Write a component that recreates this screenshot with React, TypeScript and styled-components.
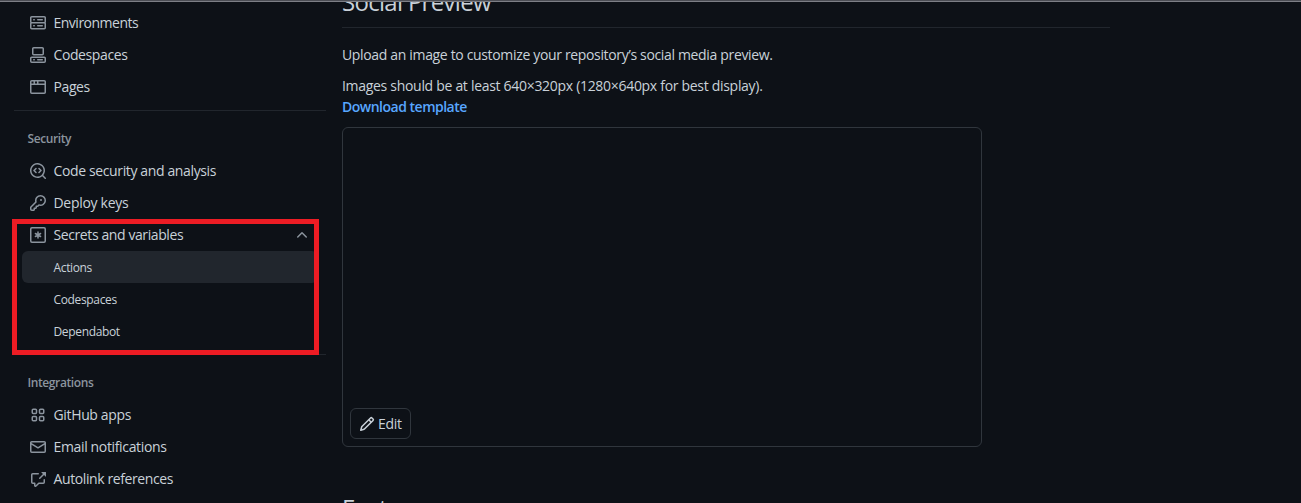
import React from "react";
import styled, { createGlobalStyle } from "styled-components";

const Global = createGlobalStyle`
  *, *::before, *::after { box-sizing: border-box; }
  body {
    margin: 0;
    background: #0d1117;
    color: #c9d1d9;
    font-family: "Open Sans", "Noto Sans", sans-serif;
    font-size: 14px;
    line-height: 21px;
    overflow: hidden;
  }
  h2, p, ul { margin: 0; padding: 0; font-weight: 400; }
`;

const Frame = styled.div`
  height: 503px;
  overflow: hidden;
`;

const TopEdge = styled.div`
  height: 2px;
  background: #7d7f86;
  border-top: 1px solid #4b4d54;
`;

const Page = styled.div`
  height: 501px;
  display: flex;
  overflow: hidden;
`;

const Sidebar = styled.nav`
  position: relative;
  width: 326px;
  padding: 5px 0 0 14px;
  flex: none;
`;

const List = styled.ul`
  list-style: none;
`;

const Row = styled.li`
  display: flex;
  align-items: center;
  gap: 7.5px;
  height: 32px;
  padding: 0 16px;
  white-space: nowrap;
`;

const Label = styled.span<{ $track?: number }>`
  flex: 1;
  padding-bottom: 1px;
  line-height: 20px;
  letter-spacing: ${(p) => p.$track ?? -0.4}px;
`;

const SubRow = styled.li<{ $active?: boolean; $track?: number }>`
  height: 32px;
  margin: 0 8px;
  padding-left: 31.5px;
  border-radius: 6px;
  font-size: 12px;
  line-height: 33px;
  letter-spacing: ${(p) => p.$track ?? -0.35}px;
  background: ${(p) => (p.$active ? "#21262d" : "transparent")};
`;

const Divider = styled.hr`
  height: 1px;
  margin: 7px 0 0;
  border: 0;
  background: #21262d;
`;

const GroupTitle = styled.h2`
  padding: 18px 0 8px 13.5px;
  height: 44px;
  font-size: 12px;
  line-height: 19px;
  letter-spacing: -0.4px;
  && { font-weight: 600; }
  color: #8b949e;
`;

const Highlight = styled.div`
  position: absolute;
  left: 12px;
  top: 217px;
  width: 307px;
  height: 136px;
  border: 5px solid #ed1c24;
`;

const Main = styled.main`
  width: 768px;
  margin-left: 16px;
  flex: none;
`;

const Heading = styled.h2<{ $gap?: number }>`
  margin-top: ${(p) => p.$gap ?? 0}px;
  height: 36px;
  font-size: 24px;
  line-height: 36px;
  letter-spacing: -0.7px;
`;

const TopHeading = styled(Heading)`
  margin-top: -18px;
  height: 44px;
  border-bottom: 1px solid #21262d;
`;

const Text = styled.p<{ $track?: number; $gap?: number }>`
  margin-top: ${(p) => p.$gap ?? 0}px;
  letter-spacing: ${(p) => p.$track ?? -0.3}px;
  white-space: nowrap;
`;

const Link = styled.a`
  display: block;
  width: max-content;
  color: #58a6ff;
  font-weight: 600;
  letter-spacing: -0.5px;
`;

const Preview = styled.div`
  display: flex;
  align-items: flex-end;
  width: 640px;
  height: 320px;
  margin-top: 10px;
  padding: 7px;
  border: 1px solid #30363d;
  border-radius: 6px;
`;

const EditButton = styled.button`
  display: flex;
  align-items: center;
  gap: 3px;
  width: 61px;
  height: 31px;
  padding: 0 8px;
  border: 1px solid #30363d;
  border-radius: 6px;
  background: transparent;
  color: #c9d1d9;
  font: inherit;
  letter-spacing: -0.3px;
`;

const Svg = styled.svg<{ $color?: string }>`
  flex: none;
  display: block;
  fill: ${(p) => p.$color ?? "#8b949e"};
`;

const paths = {
  server:
    "M1.75 1h12.5c.966 0 1.75.784 1.75 1.75v4c0 .372-.116.717-.314 1 .198.283.314.628.314 1v4a1.75 1.75 0 0 1-1.75 1.75H1.75A1.75 1.75 0 0 1 0 12.75v-4c0-.358.109-.707.314-1a1.739 1.739 0 0 1-.314-1v-4C0 1.784.784 1 1.75 1ZM1.5 2.75v4c0 .138.112.25.25.25h12.5a.25.25 0 0 0 .25-.25v-4a.25.25 0 0 0-.25-.25H1.75a.25.25 0 0 0-.25.25Zm.25 5.75a.25.25 0 0 0-.25.25v4c0 .138.112.25.25.25h12.5a.25.25 0 0 0 .25-.25v-4a.25.25 0 0 0-.25-.25ZM7 4.75A.75.75 0 0 1 7.75 4h4.5a.75.75 0 0 1 0 1.5h-4.5A.75.75 0 0 1 7 4.75ZM7.75 10h4.5a.75.75 0 0 1 0 1.5h-4.5a.75.75 0 0 1 0-1.5ZM3 4.75A.75.75 0 0 1 3.75 4h.5a.75.75 0 0 1 0 1.5h-.5A.75.75 0 0 1 3 4.75ZM3.75 10h.5a.75.75 0 0 1 0 1.5h-.5a.75.75 0 0 1 0-1.5Z",
  codespaces:
    "M0 11.25c0-.966.784-1.75 1.75-1.75h12.5c.966 0 1.75.784 1.75 1.75v3A1.75 1.75 0 0 1 14.25 16H1.75A1.75 1.75 0 0 1 0 14.25Zm2-9.5C2 .784 2.784 0 3.75 0h8.5C13.216 0 14 .784 14 1.75v5a1.75 1.75 0 0 1-1.75 1.75h-8.5A1.75 1.75 0 0 1 2 6.75Zm1.75-.25a.25.25 0 0 0-.25.25v5c0 .138.112.25.25.25h8.5a.25.25 0 0 0 .25-.25v-5a.25.25 0 0 0-.25-.25Zm-2 9.5a.25.25 0 0 0-.25.25v3c0 .138.112.25.25.25h12.5a.25.25 0 0 0 .25-.25v-3a.25.25 0 0 0-.25-.25ZM7 12.75a.75.75 0 0 1 .75-.75h4.5a.75.75 0 0 1 0 1.5h-4.5a.75.75 0 0 1-.75-.75Zm-4 0a.75.75 0 0 1 .75-.75h.5a.75.75 0 0 1 0 1.5h-.5a.75.75 0 0 1-.75-.75Z",
  browser:
    "M0 2.75C0 1.784.784 1 1.75 1h12.5c.966 0 1.75.784 1.75 1.75v10.5A1.75 1.75 0 0 1 14.25 15H1.75A1.75 1.75 0 0 1 0 13.25ZM14.5 6h-13v7.25c0 .138.112.25.25.25h12.5a.25.25 0 0 0 .25-.25Zm-6-3.5v2h6V2.75a.25.25 0 0 0-.25-.25ZM5 2.5v2h2v-2Zm-3.25 0a.25.25 0 0 0-.25.25V4.5h2v-2Z",
  codescan:
    "M8.47 4.97a.75.75 0 0 0 0 1.06L9.94 7.5 8.47 8.97a.75.75 0 1 0 1.06 1.06l2-2a.75.75 0 0 0 0-1.06l-2-2a.75.75 0 0 0-1.06 0ZM6.53 6.03a.75.75 0 0 0-1.06-1.06l-2 2a.75.75 0 0 0 0 1.06l2 2a.75.75 0 1 0 1.06-1.06L5.06 7.5l1.47-1.47ZM12.246 13.307a7.501 7.501 0 1 1 1.06-1.06l2.474 2.473a.749.749 0 1 1-1.06 1.06l-2.474-2.473ZM1.5 7.5a6.002 6.002 0 0 0 3.608 5.504 6.002 6.002 0 0 0 6.486-1.117.748.748 0 0 1 .292-.293A6 6 0 1 0 1.5 7.5Z",
  key:
    "M10.5 0a5.499 5.499 0 1 1-1.288 10.848l-.932.932a.749.749 0 0 1-.53.22H7v.75a.749.749 0 0 1-.22.53l-.5.5a.749.749 0 0 1-.53.22H5v.75a.749.749 0 0 1-.22.53l-.5.5a.749.749 0 0 1-.53.22h-2A1.75 1.75 0 0 1 0 14.25v-2c0-.199.079-.389.22-.53l4.932-4.932A5.5 5.5 0 0 1 10.5 0Zm-4 5.5c-.001.431.069.86.205 1.269a.75.75 0 0 1-.181.768L1.5 12.56v1.69c0 .138.112.25.25.25h1.69l.06-.06v-1.19a.75.75 0 0 1 .75-.75h1.19l.06-.06v-1.19a.75.75 0 0 1 .75-.75h1.19l1.023-1.025a.75.75 0 0 1 .768-.18A4 4 0 1 0 6.5 5.5ZM11 6a1 1 0 1 1 0-2 1 1 0 0 1 0 2Z",
  chevron:
    "M3.22 10.53a.749.749 0 0 1 0-1.06l4.25-4.25a.749.749 0 0 1 1.06 0l4.25 4.25a.749.749 0 1 1-1.06 1.06L8 6.811 4.28 10.53a.749.749 0 0 1-1.06 0Z",
  mail:
    "M1.75 2h12.5c.966 0 1.75.784 1.75 1.75v8.5A1.75 1.75 0 0 1 14.25 14H1.75A1.75 1.75 0 0 1 0 12.25v-8.5C0 2.784.784 2 1.75 2ZM1.5 12.251c0 .138.112.25.25.25h12.5a.25.25 0 0 0 .25-.25V5.809L8.38 9.397a.75.75 0 0 1-.76 0L1.5 5.809v6.442Zm13-8.181v-.32a.25.25 0 0 0-.25-.25H1.75a.25.25 0 0 0-.25.25v.32L8 7.88Z",
  reference:
    "M2.75 3.5a.25.25 0 0 0-.25.25v7.5c0 .138.112.25.25.25h2a.75.75 0 0 1 .75.75v2.19l2.72-2.72a.749.749 0 0 1 .53-.22h4.5a.25.25 0 0 0 .25-.25v-2.5a.75.75 0 0 1 1.5 0v2.5A1.75 1.75 0 0 1 13.25 13H9.06l-2.573 2.573A1.458 1.458 0 0 1 4 14.543V13H2.75A1.75 1.75 0 0 1 1 11.25v-7.5C1 2.784 1.784 2 2.75 2h5.5a.75.75 0 0 1 0 1.5ZM16 1.25v4.146a.25.25 0 0 1-.427.177L14.03 4.03l-3.75 3.75a.749.749 0 1 1-1.06-1.06l3.75-3.75-1.543-1.543A.25.25 0 0 1 11.604 1h4.146a.25.25 0 0 1 .25.25Z",
  pencil:
    "M11.013 1.427a1.75 1.75 0 0 1 2.474 0l1.086 1.086a1.75 1.75 0 0 1 0 2.474l-8.61 8.61c-.21.21-.47.364-.756.445l-3.251.93a.75.75 0 0 1-.927-.928l.929-3.25c.081-.286.235-.547.445-.758l8.61-8.61Zm.176 4.823L9.75 4.81l-6.286 6.287a.253.253 0 0 0-.064.108l-.558 1.953 1.953-.558a.253.253 0 0 0 .108-.064Zm1.238-3.763a.25.25 0 0 0-.354 0L10.811 3.75l1.439 1.44 1.263-1.263a.25.25 0 0 0 0-.354Z",
};

const Icon = ({ name, color }: { name: keyof typeof paths; color?: string }) => (
  <Svg width="16" height="16" viewBox="0 0 16 16" $color={color}>
    <path d={paths[name]} />
  </Svg>
);

const AsteriskIcon = () => (
  <Svg width="16" height="16" viewBox="0 0 16 16">
    <g fill="none" stroke="#8b949e" strokeWidth="1.5" strokeLinecap="round">
      <rect x="0.75" y="0.75" width="14.5" height="14.5" rx="1.2" />
      <path d="M8 5v6M5.4 6.5l5.2 3M10.6 6.5l-5.2 3" />
    </g>
  </Svg>
);

const AppsIcon = () => (
  <Svg width="16" height="16" viewBox="0 0 16 16">
    <g fill="none" stroke="#8b949e" strokeWidth="1.5">
      <rect x="2.25" y="2.25" width="4.25" height="4.25" rx="1" />
      <rect x="9.5" y="2.25" width="4.25" height="4.25" rx="1" />
      <rect x="2.25" y="9.5" width="4.25" height="4.25" rx="1" />
      <rect x="9.5" y="9.5" width="4.25" height="4.25" rx="1" />
    </g>
  </Svg>
);

export default function App() {
  return (
    <Frame>
      <Global />
      <TopEdge />
      <Page>
        <Sidebar>
          <List>
            <Row><Icon name="server" /><Label $track={-0.5}>Environments</Label></Row>
            <Row><Icon name="codespaces" /><Label>Codespaces</Label></Row>
            <Row><Icon name="browser" /><Label>Pages</Label></Row>
          </List>
          <Divider />
          <GroupTitle>Security</GroupTitle>
          <List>
            <Row><Icon name="codescan" /><Label $track={-0.37}>Code security and analysis</Label></Row>
            <Row><Icon name="key" /><Label $track={-0.3}>Deploy keys</Label></Row>
            <Row><AsteriskIcon /><Label>Secrets and variables</Label><Icon name="chevron" /></Row>
            <SubRow $active>Actions</SubRow>
            <SubRow>Codespaces</SubRow>
            <SubRow>Dependabot</SubRow>
          </List>
          <Divider />
          <GroupTitle>Integrations</GroupTitle>
          <List>
            <Row><AppsIcon /><Label $track={-0.35}>GitHub apps</Label></Row>
            <Row><Icon name="mail" /><Label $track={-0.35}>Email notifications</Label></Row>
            <Row><Icon name="reference" /><Label>Autolink references</Label></Row>
          </List>
          <Highlight />
        </Sidebar>
        <Main>
          <TopHeading>Social Preview</TopHeading>
          <Text $gap={16} $track={-0.34}>Upload an image to customize your repository’s social media preview.</Text>
          <Text $gap={10}>Images should be at least 640×320px (1280×640px for best display).</Text>
          <Link>Download template</Link>
          <Preview>
            <EditButton><Icon name="pencil" color="#c9d1d9" />Edit</EditButton>
          </Preview>
          <Heading $gap={43}>Features</Heading>
        </Main>
      </Page>
    </Frame>
  );
}
